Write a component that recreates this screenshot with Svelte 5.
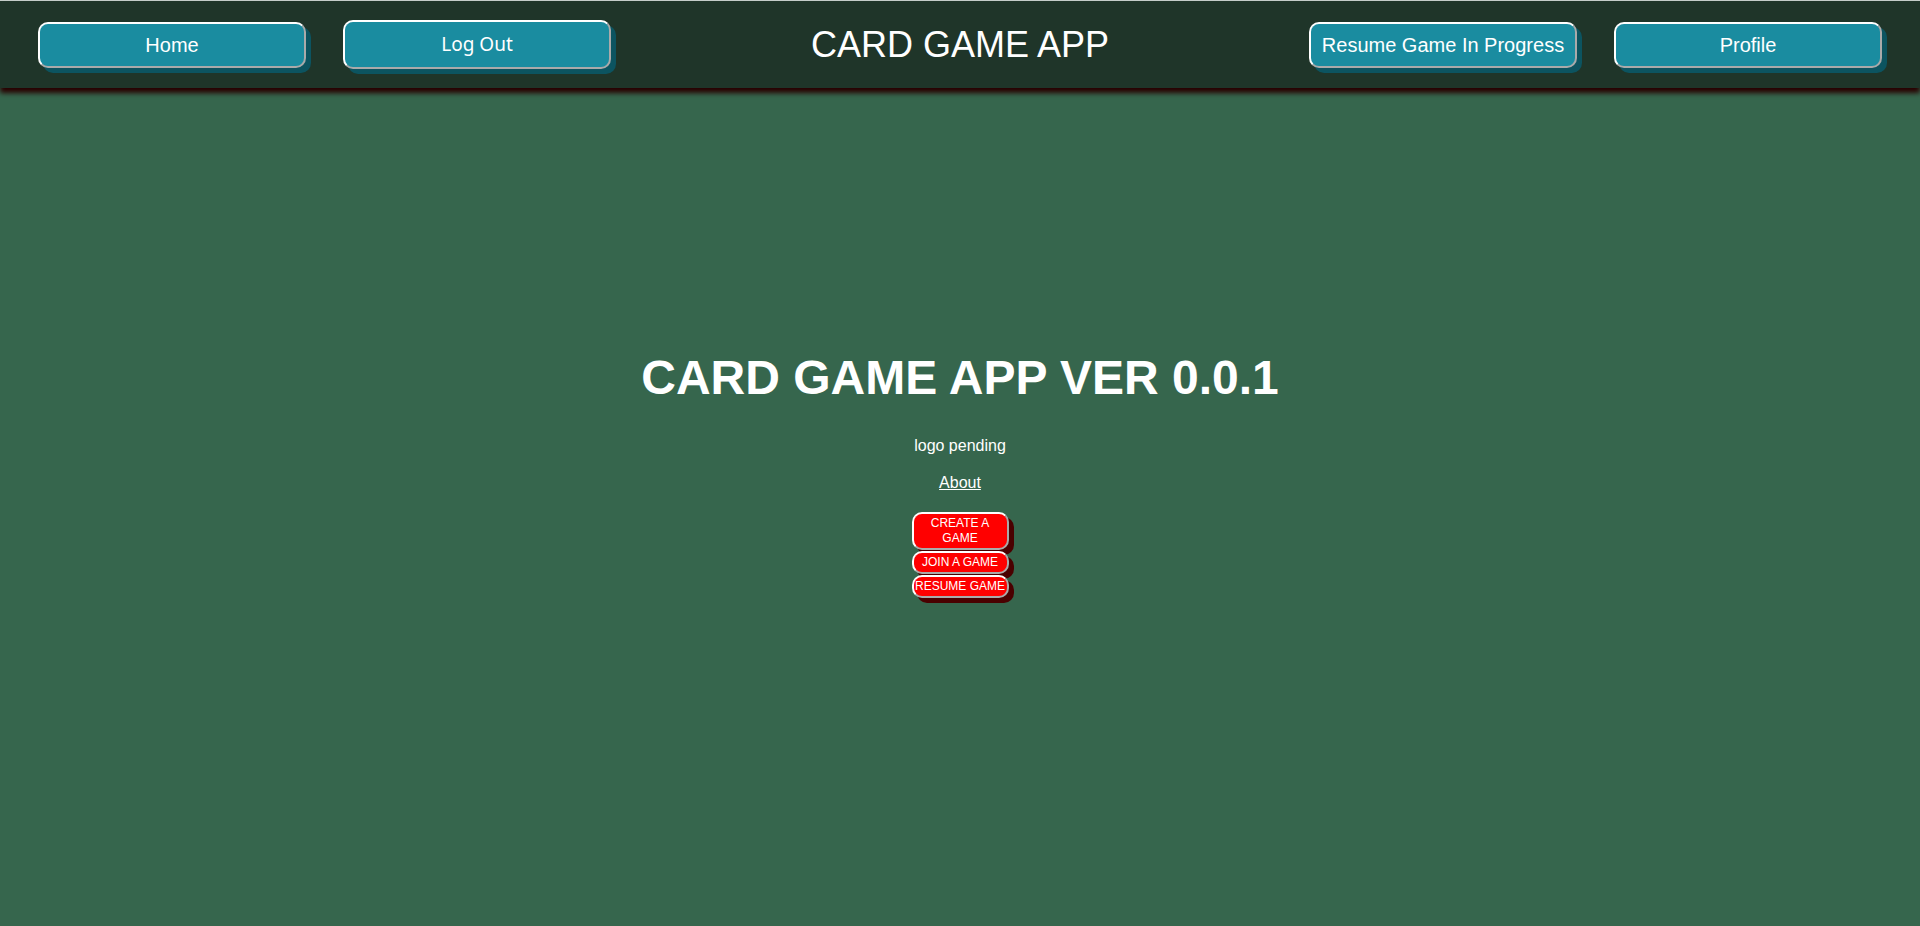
<script>
  const left = [{ label: 'Home' }, { label: 'Log Out', button: true }];
  const right = [{ label: 'Resume Game In Progress' }, { label: 'Profile' }];
  const actions = ['CREATE A GAME', 'JOIN A GAME', 'RESUME GAME'];
</script>

{#snippet item(entry)}
  {#if entry.button}
    <button class="nav-item logout" type="button">{entry.label}</button>
  {:else}
    <a class="nav-item" href="#top">{entry.label}</a>
  {/if}
{/snippet}

<div class="page" id="top">
  <header>
    <nav class="group">
      {#each left as entry}{@render item(entry)}{/each}
    </nav>
    <div class="brand">CARD GAME APP</div>
    <nav class="group end">
      {#each right as entry}{@render item(entry)}{/each}
    </nav>
  </header>

  <main>
    <h1>CARD GAME APP VER 0.0.1</h1>
    <p>logo pending</p>
    <a class="about" href="#top">About</a>
    <div class="actions">
      {#each actions as action}
        <button type="button">{action}</button>
      {/each}
    </div>
  </main>
</div>

<style>
  :global(body) {
    margin: 0;
    background: #36664d;
  }

  .page {
    box-sizing: border-box;
    min-height: 100vh;
    display: flex;
    flex-direction: column;
    border-top: 1px solid #c8d0cc;
    color: #fff;
    font-family: 'Liberation Sans', Arial, sans-serif;
    font-size: 16px;
  }

  header {
    display: grid;
    grid-template-columns: 1fr auto 1fr;
    align-items: center;
    box-sizing: border-box;
    min-height: 87px;
    padding: 0 38px;
    background: #1f3529;
    box-shadow: 0 5px 5px #280000;
  }

  .group {
    display: flex;
    align-items: center;
    gap: 37px;
  }

  .end {
    justify-content: flex-end;
  }

  .nav-item {
    box-sizing: border-box;
    flex: 0 1 268px;
    padding: 10px 0;
    border: 2px solid;
    border-color: #fff #aaa #aaa #fff;
    border-radius: 10px;
    background: #1a8ca0;
    box-shadow: 5px 5px #0c5460;
    color: #fff;
    font-size: 20px;
    line-height: 22px;
    text-align: center;
    text-decoration: none;
    white-space: nowrap;
  }

  .logout {
    font-family: 'Noto Sans', 'Segoe UI', sans-serif;
    font-size: 19px;
    line-height: 25px;
  }

  .brand {
    font-size: 36px;
    line-height: 42px;
  }

  main {
    flex: 1;
    display: flex;
    flex-direction: column;
    align-items: center;
    justify-content: center;
    padding-bottom: 66px;
  }

  h1 {
    margin: 0 0 30px;
    font-size: 48px;
    line-height: 56px;
  }

  p {
    margin: 0 0 18px;
    line-height: 19px;
  }

  .about {
    margin-bottom: 20px;
    color: #fff;
    line-height: 19px;
  }

  .actions {
    display: flex;
    flex-direction: column;
    gap: 1px;
    width: 97px;
  }

  .actions button {
    padding: 2px 0;
    border: 2px solid;
    border-color: #fff #aaa #aaa #fff;
    border-radius: 10px;
    background: #f00;
    box-shadow: 5px 5px #4a0000;
    color: #fff;
    font-family: inherit;
    font-size: 12px;
    line-height: 15px;
  }
</style>
